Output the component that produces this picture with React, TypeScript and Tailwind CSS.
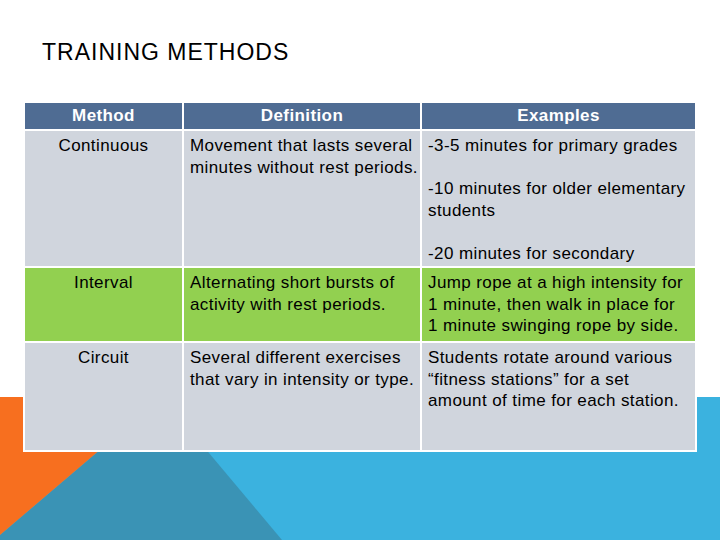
import React from "react";

const font = { fontFamily: '"Liberation Sans", Arial, sans-serif' };

function Lines({ lines }: { lines: string[] }) {
  return (
    <>
      {lines.map((l, i) => (
        <div key={i} className="whitespace-nowrap h-[21.5px]">
          {l === "" ? "\u00a0" : l}
        </div>
      ))}
    </>
  );
}

const rows = [
  {
    bg: "bg-[#d0d5dd]",
    h: "h-[135px]",
    method: "Continuous",
    def: ["Movement that lasts several", "minutes without rest periods."],
    ex: [
      "-3-5 minutes for primary grades",
      "",
      "-10 minutes for older elementary",
      "students",
      "",
      "-20 minutes for secondary",
    ],
  },
  {
    bg: "bg-[#92d050]",
    h: "h-[73px]",
    method: "Interval",
    def: ["Alternating short bursts of", "activity with rest periods."],
    ex: [
      "Jump rope at a high intensity for",
      "1 minute, then walk in place for",
      "1 minute swinging rope by side.",
    ],
  },
  {
    bg: "bg-[#d0d5dd]",
    h: "h-[107px]",
    method: "Circuit",
    def: ["Several different exercises", "that vary in intensity or type."],
    ex: [
      "Students rotate around various",
      "\u201cfitness stations\u201d for a set",
      "amount of time for each station.",
    ],
  },
];

export default function App() {
  return (
    <div
      className="relative w-[720px] h-[540px] bg-white overflow-hidden text-black"
      style={font}
    >
      <svg
        className="absolute left-0 top-[397px]"
        width="720"
        height="143"
        viewBox="0 0 720 143"
      >
        <rect x="0" y="0" width="720" height="143" fill="#3bb2df" />
        <polygon points="162,0 282,143 0,143 0,138" fill="#3a93b5" />
        <polygon points="0,0 162,0 0,138" fill="#f76f1f" />
      </svg>

      <div className="relative pt-[39px]">
        <div className="ml-[42px] text-[23px] leading-[26px] tracking-[1px] text-black">
          TRAINING METHODS
        </div>

        <div className="mt-[36px] ml-[23px] w-[674px] bg-white p-[2px] grid grid-cols-[157px_236px_273px] gap-[2px] text-[17px] leading-[21.5px] tracking-[0.4px]">
          <div className="h-[26px] bg-[#4f6c93] text-white font-bold flex items-center justify-center">
            Method
          </div>
          <div className="h-[26px] bg-[#4f6c93] text-white font-bold flex items-center justify-center">
            Definition
          </div>
          <div className="h-[26px] bg-[#4f6c93] text-white font-bold flex items-center justify-center">
            Examples
          </div>

          {rows.map((r, i) => (
            <React.Fragment key={i}>
              <div className={`${r.bg} ${r.h} pt-[4px] text-center`}>
                {r.method}
              </div>
              <div className={`${r.bg} ${r.h} pt-[4px] pl-[6px]`}>
                <Lines lines={r.def} />
              </div>
              <div className={`${r.bg} ${r.h} pt-[4px] pl-[6px]`}>
                <Lines lines={r.ex} />
              </div>
            </React.Fragment>
          ))}
        </div>
      </div>
    </div>
  );
}
